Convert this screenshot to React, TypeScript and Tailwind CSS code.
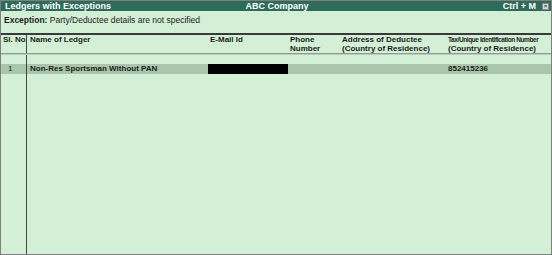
const cols = "grid grid-cols-[26px_180px_80px_52px_106px_1fr]";

const App = () => {
  return (
    <div className="w-[552px] h-[255px] border border-[#7f7f7f] bg-[#d3efd6] flex flex-col overflow-hidden font-['Liberation_Sans',Arial,sans-serif] text-[#1c1c1c]">
      <div className="h-[10px] bg-[#2e6b5a] text-white font-bold text-[9px] leading-[10px] flex items-center pl-1 pr-[2px]">
        <span className="flex-1">Ledgers with Exceptions</span>
        <span className="flex-1 text-center">ABC Company</span>
        <span className="flex-1 flex justify-end items-center gap-[6px]">
          <span>Ctrl + M</span>
          <span className="w-[7px] h-[7px] bg-[#d8d8d8] border border-[#8a8a8a] flex items-center justify-center text-[6px] leading-none text-[#444]">
            ×
          </span>
        </span>
      </div>
      <div className="h-[22px] pl-[3px] pt-[4px] text-[8.5px] leading-[10px]">
        <span className="font-bold">Exception:</span> Party/Deductee details
        are not specified
      </div>
      <div className="h-[2px] bg-[#3a3a3a]" />
      <div className={`${cols} h-[18px] text-[8px] font-bold leading-[8.5px] whitespace-nowrap`}>
        <div className="pl-[2px] pt-[1px] border-r border-[#444]">Sl. No</div>
        <div className="pl-[3px] pt-[1px]">Name of Ledger</div>
        <div className="pl-[3px] pt-[1px]">E-Mail Id</div>
        <div className="pl-[3px] pt-[1px]">
          <div>Phone</div>
          <div>Number</div>
        </div>
        <div className="pl-[3px] pt-[1px]">
          <div>Address of Deductee</div>
          <div>(Country of Residence)</div>
        </div>
        <div className="pl-[3px] pt-[1px]">
          <div className="text-[6.5px] tracking-[-0.4px]">
            Tax/Unique Identification Number
          </div>
          <div>(Country of Residence)</div>
        </div>
      </div>
      <div className="h-[2px] bg-[#8c9e8f] border-b border-[#b9cfbb]" />
      <div className="flex-1 flex flex-col">
        <div className={`${cols} h-[9px]`}>
          <div className="border-r border-[#444]" />
        </div>
        <div className={`${cols} h-[10px] bg-[#a9c6ab] text-[8px] font-bold leading-[10px]`}>
          <div className="pl-[7px] font-normal border-r border-[#444]">1</div>
          <div className="pl-[3px]">Non-Res Sportsman Without PAN</div>
          <div className="pl-[1px]">
            <div className="h-[10px] w-[80px] bg-black" />
          </div>
          <div />
          <div />
          <div className="pl-[3px]">852415236</div>
        </div>
        <div className={`${cols} flex-1`}>
          <div className="border-r border-[#444]" />
        </div>
      </div>
    </div>
  );
};

export default App;
